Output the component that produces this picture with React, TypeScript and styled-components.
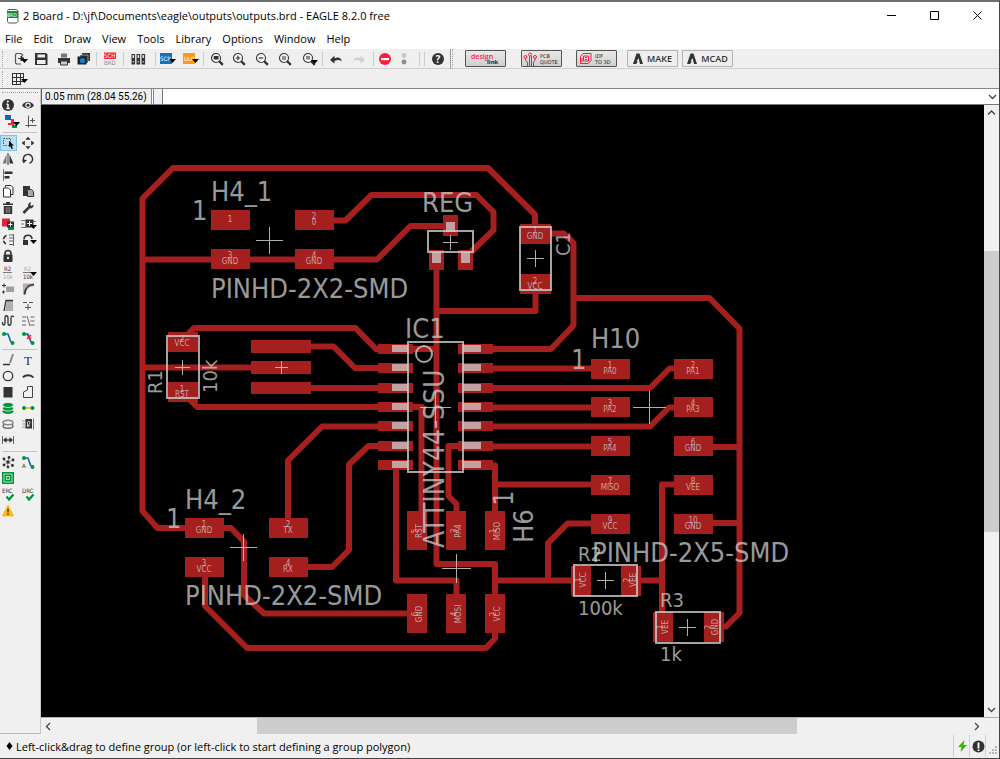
import React from 'react';
import styled, { createGlobalStyle } from 'styled-components';

const INK = '#333333';
const RED = '#fa1e3c';
const GREEN = '#00963c';

const GlobalStyle = createGlobalStyle`
  * { box-sizing: border-box; }
  body { margin: 0; background: #ffffff; }
  button, input { font: inherit; color: inherit; margin: 0; }
`;

/* ---------- window frame ---------- */

const Window = styled.div`
  display: flex;
  flex-direction: column;
  height: 100vh;
  min-height: 480px;
  border-top: 2px solid #6e6e6e;
  border-right: 1px solid #444444;
  border-bottom: 1px solid #444444;
  background: #f0f0f0;
  color: #000000;
  font-family: 'Open Sans', 'Noto Sans', sans-serif;
  font-size: 11px;
  line-height: 16px;
`;

const TitleBar = styled.header`
  display: flex;
  align-items: center;
  flex: none;
  height: 27px;
  padding-left: 6px;
  background: #ffffff;
`;

const Title = styled.h1`
  flex: 1;
  margin: 0 0 0 4px;
  font-size: 11px;
  font-weight: 400;
  white-space: nowrap;
`;

const CaptionButton = styled.button`
  display: flex;
  align-items: center;
  justify-content: center;
  width: 43px;
  height: 27px;
  padding: 0;
  border: 0;
  background: transparent;
`;

const MenuBar = styled.nav`
  display: flex;
  align-items: center;
  flex: none;
  gap: 11px;
  height: 20px;
  padding-left: 5px;
  background: #ffffff;
`;

const MenuButton = styled.button`
  padding: 0;
  border: 0;
  background: transparent;
`;

/* ---------- toolbars ---------- */

const Toolbar = styled.div<{ $h: number; $line: string }>`
  display: flex;
  align-items: center;
  flex: none;
  height: ${p => p.$h}px;
  border-bottom: 1px solid ${p => p.$line};
  background: #efefef;
`;

const Grip = styled.span<{ $gap: number }>`
  width: 2px;
  height: 16px;
  margin: 0 ${p => p.$gap}px 0 2px;
  border-left: 1px dotted #a8a8a8;
`;

const ToolButton = styled.button<{ $w: number }>`
  display: flex;
  align-items: center;
  justify-content: center;
  flex: none;
  width: ${p => p.$w}px;
  height: 18px;
  padding: 0;
  border: 0;
  background: transparent;
  svg { flex: none; }
`;

const Spacer = styled.span<{ $w: number }>`
  flex: none;
  width: ${p => p.$w}px;
`;

const Divider = styled.span<{ $w: number }>`
  display: flex;
  justify-content: center;
  flex: none;
  width: ${p => p.$w}px;
  &::before {
    content: '';
    width: 1px;
    height: 14px;
    background: #cccccc;
  }
`;

const DockEdge = styled.span`
  flex: none;
  width: 3px;
  height: 20px;
  margin-right: 12px;
  border-left: 1px solid #a0a0a0;
  border-right: 1px dotted #a8a8a8;
`;

const ServiceButton = styled.button<{ $gap: number }>`
  display: flex;
  align-items: center;
  justify-content: center;
  flex: none;
  width: 41px;
  height: 17px;
  margin-right: ${p => p.$gap}px;
  padding: 0;
  border: 1px solid #555555;
  border-radius: 1px;
  background: linear-gradient(#e8e8e8, #cfcfcf);
`;

const LinkButton = styled.button`
  display: flex;
  align-items: center;
  justify-content: center;
  flex: none;
  gap: 4px;
  width: 51px;
  height: 17px;
  margin-right: 4px;
  padding: 0;
  border: 1px solid #b4b4b4;
  border-radius: 1px;
  background: #eeeeee;
  color: #333333;
  font-size: 9px;
  font-weight: 600;
`;

/* ---------- body ---------- */

const Body = styled.div`
  display: flex;
  flex: 1;
  min-height: 0;
`;

const Palette = styled.aside`
  display: flex;
  flex-direction: column;
  flex: none;
  width: 41px;
  padding-top: 3px;
  border-right: 1px solid #c8c8c8;
  border-bottom: 1px solid #b8b8b8;
`;

const PaletteGrip = styled.span`
  height: 1px;
  margin: 0 2px 4px;
  border-top: 1px dotted #a0a0a0;
`;

const PaletteRule = styled.hr`
  flex: none;
  width: 35px;
  height: 1px;
  margin: 3px 0 2px 2px;
  border: 0;
  background: #c4c4c4;
`;

const PaletteGroup = styled.div`
  display: flex;
  flex-direction: column;
  gap: 1px;
`;

const PaletteBlock = styled.div`
  display: grid;
  grid-template-columns: 20px 20px;
  grid-auto-rows: 16px;
`;

const PaletteButton = styled.button<{ $on?: boolean }>`
  display: flex;
  align-items: center;
  justify-content: flex-start;
  width: 17px;
  height: 16px;
  padding: 0;
  border: 0;
  background: ${p => (p.$on ? '#b9dff5' : 'transparent')};
  outline: ${p => (p.$on ? '1px solid #7fc0ea' : 'none')};
  outline-offset: -1px;
  svg { flex: none; }
`;

const Main = styled.main`
  display: flex;
  flex-direction: column;
  flex: 1;
  min-width: 0;
`;

const CommandRow = styled.div`
  display: flex;
  flex: none;
  height: 16px;
  border-bottom: 1px solid #777777;
`;

const Coordinates = styled.output`
  width: 111px;
  padding-left: 3px;
  border-left: 1px solid #666666;
  border-right: 1px solid #888888;
  font-family: Roboto, 'Noto Sans', sans-serif;
  font-size: 10px;
  line-height: 15px;
  white-space: nowrap;
`;

const Stub = styled.span`
  width: 11px;
  border-left: 1px solid #ffffff;
  border-right: 1px solid #777777;
  background: #f0f0f0;
  box-shadow: inset 1px 0 0 #888888;
`;

const CommandField = styled.div`
  display: flex;
  flex: 1;
  align-items: center;
  background: #ffffff;
`;

const CommandInput = styled.input`
  flex: 1;
  min-width: 0;
  height: 15px;
  padding: 0 4px;
  border: 0;
  outline: 0;
  background: transparent;
`;

const BareButton = styled.button`
  display: flex;
  align-items: center;
  justify-content: center;
  flex: none;
  width: 14px;
  height: 15px;
  padding: 0;
  border: 0;
  background: transparent;
`;

const CanvasRow = styled.div`
  display: flex;
  flex: 1;
  min-height: 0;
`;

const Canvas = styled.div`
  flex: 1;
  min-width: 0;
  background: #000000;
  svg { display: block; width: 100%; height: 100%; }
`;

const VScroll = styled.div`
  display: flex;
  flex-direction: column;
  align-items: center;
  flex: none;
  width: 15px;
`;

const HScroll = styled.div`
  display: flex;
  align-items: center;
  flex: none;
  height: 17px;
  padding-right: 16px;
  border-top: 1px solid #b0b0b0;
`;

const Track = styled.span<{ $part: number; $thumb?: boolean }>`
  flex: ${p => p.$part};
  align-self: stretch;
  background: ${p => (p.$thumb ? '#cdcdcd' : 'transparent')};
`;

const StatusBar = styled.footer`
  display: flex;
  align-items: center;
  flex: none;
  height: 24px;
  padding-left: 6px;
`;

const Hint = styled.span`
  flex: 1;
  margin-left: 3px;
  padding-top: 1px;
  white-space: nowrap;
`;

const StatusCell = styled.span<{ $w?: number }>`
  display: flex;
  align-items: center;
  justify-content: center;
  flex: none;
  width: ${p => p.$w ?? 16}px;
  height: 22px;
  padding-left: 1px;
  border-left: 1px solid #d0d0d0;
`;

/* ---------- icons ---------- */

type Draw = React.ReactNode;

const Arrow = ({ x = 12, y = 9 }: { x?: number; y?: number }) => (
  <path d={`M${x} ${y}h7l-3.5 4z`} fill="#000" />
);

const Svg = ({ w = 16, h = 16, children }: { w?: number; h?: number; children: Draw }) => (
  <svg width={w} height={h} viewBox={`0 0 ${w} ${h}`} fill="none" stroke="none" aria-hidden="true">
    {children}
  </svg>
);

const Lens = ({ children }: { children?: Draw }) => (
  <>
    <circle cx="7" cy="7" r="4.500" stroke={INK} strokeWidth="1.100" fill="#f6f6f6" />
    <path d="M10 10l3.800 3.800" stroke={INK} strokeWidth="2.400" />
    {children}
  </>
);

const Tiny = ({ x, y, fill = INK, size = 6, children }: { x: number; y: number; fill?: string; size?: number; children: string }) => (
  <text x={x} y={y} fill={fill} fontSize={size} fontFamily="'DejaVu Sans Condensed', 'DejaVu Sans', sans-serif">{children}</text>
);

type Tool = { label: string; w: number; vw?: number; art: Draw };
/* A positive number is a divider of that width, a negative one an empty gap. */
type Item = Tool | number;

const mainTools: Item[] = [
  { label: 'Open', w: 21, vw: 19, art: <><path d="M11.500 5V4L10 2.500H5.500L4.500 3.500V12l1 1H10" stroke="#555" strokeWidth="1.200" /><path d="M7 7.500h4M10 5l3 2.500-3 2.500z" stroke={INK} fill={INK} /><Arrow x={10} y={8} /></> },
  { label: 'Save', w: 20, art: <><path d="M3 2h10l1.500 1.500V14H2V2z" fill={INK} /><rect x="4.500" y="3.500" width="7.500" height="3" fill="#eee" /><rect x="4" y="9" width="8.500" height="4" fill="#eee" /></> },
  { label: 'Print', w: 25, art: <><path d="M5 2.500h6v4H5z" fill="#777" /><path d="M2 7h12v5H2z" fill={INK} /><path d="M4.500 10h7v4h-7z" fill="#ccc" stroke={INK} /></> },
  { label: 'CAM Processor', w: 16, art: <><path d="M6 2h8v8H6z" fill={INK} /><path d="M4 4h8v8H4z" fill={INK} stroke="#efefef" strokeWidth=".5" /><rect x="1.500" y="5.500" width="9" height="8" fill="#222" /><circle cx="6.500" cy="9.500" r="2.600" fill="#0b84d8" /></> },
  9,
  { label: 'Switch to schematic', w: 17, art: <><rect x="2" y="1.500" width="12" height="6.500" fill={RED} /><Tiny x={2} y={7} fill="#fff">SCH</Tiny><Tiny x={2} y={14} fill="#888">BRD</Tiny></> },
  11,
  { label: 'Library manager', w: 17, art: <>{[1.500, 6.500, 11.500].map(x => <g key={x}><rect x={x} y="3" width="3.600" height="10.500" fill={INK} /><rect x={x + 1} y="4" width="1.600" height="3" fill="#ddd" /><rect x={x + 1} y="10" width="1.600" height="1.500" fill="#aaa" /></g>)}</> },
  -7,
  4,
  { label: 'Run script', w: 21, vw: 19, art: <><rect x="2" y="2" width="12" height="11" fill="#0f74bd" /><Tiny x={2} y={10} fill="#fff">SCR</Tiny><Arrow x={11} y={8} /></> },
  { label: 'Run ULP', w: 24, vw: 19, art: <><rect x="2" y="2" width="12" height="11" fill="#fc9a10" /><Tiny x={3} y={10} fill="#fff">ULP</Tiny><Arrow x={11} y={8} /></> },
  2,
  -5,
  { label: 'Zoom to fit', w: 16, art: <Lens><rect x="4.700" y="5" width="4.800" height="3.500" fill={INK} /></Lens> },
  { label: 'Zoom in', w: 28, art: <Lens><path d="M4.800 7h4.400M7 4.800v4.400" stroke={INK} strokeWidth="1.200" /></Lens> },
  { label: 'Zoom out', w: 18, art: <Lens><path d="M4.800 7h4.400" stroke={INK} strokeWidth="1.200" /></Lens> },
  { label: 'Redraw', w: 28, art: <Lens><path d="M5 6h4M5 8h4" stroke={INK} /></Lens> },
  { label: 'Zoom select', w: 22, vw: 19, art: <><Lens><rect x="5" y="5" width="4" height="3.500" fill="#888" /></Lens><Arrow x={10} y={9} /></> },
  3,
  { label: 'Undo', w: 24, art: <path d="M2 9l4.500-4.500v2.700C10 5.500 13 6.500 14 10.500c-2-2-4.500-2-7.500-.500v2.500z" fill={INK} /> },
  { label: 'Redo', w: 22, art: <path d="M14 9L9.500 4.500v2.700C6 5.500 3 6.500 2 10.500c2-2 4.500-2 7.500-.500v2.500z" fill="#d0d0d0" /> },
  6,
  { label: 'Stop', w: 17, art: <><circle cx="8" cy="8" r="6" fill={RED} /><rect x="4" y="7" width="8" height="2.200" fill="#fff" /></> },
  { label: 'Go', w: 22, art: <><circle cx="8" cy="4.500" r="2.400" fill="#c8c8c8" /><circle cx="8" cy="11" r="2.400" fill="#8c8c8c" /></> },
  8,
  2,
  { label: 'Help', w: 25, art: <><circle cx="8" cy="8" r="6" fill={INK} /><text x="8" y="11.500" textAnchor="middle" fontSize="10" fontWeight="700" fill="#fff" fontFamily="'Open Sans', sans-serif">?</text></> },
];

const dot = (x: number, y: number, c: string, r = 2) => <circle cx={x} cy={y} r={r} fill={c} />;

type Cell = { label: string; on?: boolean; art: Draw } | null;

const palTop: Cell[][] = [[
  { label: 'Info', art: <><circle cx="8" cy="8" r="6" fill={INK} /><path d="M8 7v4.500M6.500 7.200H8M6.300 11.500h3.500" stroke="#fff" strokeWidth="1.500" />{dot(7.800, 4.500, '#fff', 1)}</> },
  { label: 'Show', art: <><path d="M2 8.500C5 3.500 11 3.500 14 8.500 11 12.500 5 12.500 2 8.500z" fill={INK} /><circle cx="8" cy="8.300" r="2.700" fill="#efefef" />{dot(8, 8.300, INK, 1.500)}</> },
  { label: 'Layer settings', art: <><rect x="5" y="2" width="6" height="5" fill="#1268b3" /><path d="M11 6v4H8v2h6V6z" fill={RED} /><path d="M12 12h5v3h-5z" fill={GREEN} /><Arrow x={13} y={9} /></> },
  { label: 'Mark', art: <path d="M8.500 2.500v12M5.500 12.500h11M12.500 5v5M10 7.500h5" stroke="#555" /> },
]];

const palEdit: Cell[][] = [
  [
    { label: 'Group', on: true, art: <><rect x="3.500" y="3.500" width="7" height="7" stroke="#555" strokeDasharray="1.500 1" /><path d="M9 6l5 4.500h-2.300l1.300 3-1.500.600-1.300-3L9 12.500z" fill="#000" /></> },
    { label: 'Move', art: <path d="M8 2l2 2.500H6zM8 14l2-2.500H6zM2 8l2.500-2v4zM14 8l-2.500-2v4z" fill={INK} stroke={INK} strokeWidth=".600" /> },
    { label: 'Mirror', art: <><path d="M6.500 3.500v9H2.500z" fill="#777" /><path d="M9.500 3.500v9h4z" fill={INK} /><path d="M8 2v12" stroke={INK} /></> },
    { label: 'Rotate', art: <><path d="M4.500 11A4.600 4.600 0 1 1 9.500 12.300" stroke={INK} strokeWidth="1.400" /><path d="M2 8.500l5 .500-3.500 3.500z" fill={INK} /></> },
    { label: 'Align', art: <><path d="M3.500 2v12" stroke="#777" /><path d="M4.500 4.500h8v2.500h-8zM4.500 9h5v2.500h-5z" fill={INK} /></> },
    null,
    { label: 'Copy', art: <><path d="M5.500 4.500v-2H11l2 2v7h-2" stroke={INK} /><path d="M3.500 5h5l2 2v7h-7z" stroke={INK} fill="#fff" /></> },
    { label: 'Paste', art: <><path d="M3 3h7v3H7v7H3z" fill={INK} /><path d="M7.500 6.500h4l2 2v5h-6z" fill="#aaa" stroke={INK} /></> },
  ],
  [
    { label: 'Delete', art: <><path d="M3 3.500h10v1.600H3zM6 2h4v1.500H6z" fill={INK} /><path d="M3.800 6h8.400v8H3.800z" fill={INK} /><path d="M6.300 7v6M8 7v6M9.700 7v6" stroke="#aaa" strokeWidth=".700" /></> },
    { label: 'Change', art: <path d="M13.500 4.500l-2 1.500-1.500-1.500 1.500-2c-2.500-.500-4 1.500-3.200 3.700L2.500 12l1.800 2 5.500-5.800c2 .800 4.200-1 3.700-3.700z" fill={INK} /> },
    { label: 'Replace', art: <><rect x="2" y="2.500" width="8" height="8" fill="#e4203a" /><path d="M8 9h6v5H8z" fill={GREEN} /><rect x="7" y="5.500" width="7" height="6" fill={INK} /><path d="M8.500 8.500h4M10.500 6.500v4" stroke="#fff" /></> },
    { label: 'Add', art: <><path d="M1 4.500h5M1 11.500h5M1 8h3M13 5.500h3" stroke="#777" /><rect x="5.500" y="3.500" width="8" height="8" fill={INK} /><path d="M7 7.500h5M9.500 5v5" stroke="#fff" /><Arrow x={10} y={9} /></> },
    { label: 'Pinswap', art: <><path d="M9 3h4M9 6h4M9 9h4M9 12.500h4M13.500 2v12" stroke="#666" /><path d="M6.500 3.500C2.500 5 2.500 10 6 12" stroke={INK} strokeWidth="1.500" strokeDasharray="5 1.500" /></> },
    { label: 'Gateswap', art: <><path d="M4 7.500C4 2 12 2 12 7" stroke={INK} strokeWidth="1.600" /><rect x="3" y="8" width="5" height="5" fill={INK} /><Arrow x={10} y={8} /></> },
    { label: 'Lock', art: <><path d="M5 7V5.500a3 3 0 0 1 6 0V7" stroke={INK} strokeWidth="1.600" /><rect x="3.500" y="6.500" width="9" height="7.500" rx="1" fill={INK} />{dot(8, 10, '#eee', 1.200)}</> },
    null,
  ],
  [
    { label: 'Name', art: <><Tiny x={4} y={6}>R2</Tiny><path d="M3 7.500h9" stroke="#777" /><Tiny x={3} y={14} fill="#aaa">10k</Tiny></> },
    { label: 'Value', art: <><Tiny x={4} y={6} fill="#aaa">R2</Tiny><path d="M3 7.500h9" stroke="#777" /><Tiny x={3} y={14}>10k</Tiny><Arrow x={10} y={7} /></> },
    { label: 'Smash', art: <><path d="M6 5.500h8v5.500H6z" fill="#a0a0a0" /><path d="M2 4.500h4M4 2.500v4M2 11h3M3.500 9.500v3" stroke={INK} /></> },
    { label: 'Miter', art: <><path d="M3 2.500h11v3C9 5.500 6.500 8 6 13.500H3z" fill="#b0b0b0" /><path d="M14 3.500C8 3.500 5 7 4.500 13.500" stroke={INK} strokeWidth="1.500" /></> },
    { label: 'Split', art: <><path d="M5 14L7 3h6v11z" fill="#b0b0b0" /><path d="M4 14L6 3.500h7" stroke={INK} strokeWidth="1.300" /></> },
    { label: 'Optimize', art: <path d="M3 5.500h4M9 5.500h4M8 7v6M5 10.500h6" stroke="#555" /> },
    { label: 'Meander', art: <path d="M2.500 9c0 4 2.500 4 2.500 0V5c0-3 3-3 3 0v5c0 3 3 3 3 0V5c0-2 2-2.500 3-1" stroke={INK} strokeWidth="1.300" /> },
    { label: 'Differential pair', art: <path d="M2 4h4M2 8h4M2 12h4M7 3l3 10M10.500 4h4M10.500 8h4M10.500 12h4" stroke="#666" /> },
  ],
  [
    { label: 'Route', art: <><path d="M4 4h4l2.500 7 2 2" stroke="#1268b3" strokeWidth="1.600" />{dot(4, 4, GREEN)}{dot(12.500, 13, GREEN)}</> },
    { label: 'Ripup', art: <><path d="M4 4h4l2.500 7 2 2" stroke="#1268b3" strokeWidth="1.600" />{dot(4, 4, GREEN)}{dot(12.500, 13, GREEN)}<path d="M7 5l4 4M11 5l-4 4" stroke={RED} strokeWidth="1.500" /></> },
  ],
];

const palDraw: Cell[][] = [[
  { label: 'Wire', art: <><path d="M3 12.500h7" stroke={INK} strokeWidth="1.500" /><path d="M10 11l3-9" stroke="#888" strokeWidth="2" /></> },
  { label: 'Text', art: <text x="8" y="12.500" textAnchor="middle" fontSize="13" fill={INK} fontFamily="'Liberation Serif', serif">T</text> },
  { label: 'Circle', art: <circle cx="8" cy="8" r="4.700" stroke={INK} strokeWidth="1.300" /> },
  { label: 'Arc', art: <path d="M3 9.500C5 6.500 11 6.500 13.500 9.500" stroke={INK} strokeWidth="1.800" /> },
  { label: 'Rectangle', art: <rect x="3.500" y="3" width="9" height="10.500" fill={INK} /> },
  { label: 'Polygon', art: <path d="M12.500 2.500v11h-9V8l4-2V2.500z" stroke="#444" /> },
  { label: 'Via', art: <><ellipse cx="8" cy="11.500" rx="5.500" ry="2.500" fill={GREEN} /><ellipse cx="8" cy="8.500" rx="5.500" ry="2.500" fill={GREEN} stroke="#fff" strokeWidth=".700" /><ellipse cx="8" cy="5" rx="5.500" ry="2.500" fill={GREEN} stroke="#fff" strokeWidth=".700" /></> },
  { label: 'Signal', art: <><path d="M4 8h8" stroke="#f0b800" strokeWidth="1.600" />{dot(4, 8, GREEN)}{dot(12.500, 8, GREEN)}</> },
  { label: 'Hole', art: <><ellipse cx="8" cy="10" rx="5" ry="2.300" stroke="#666" strokeWidth="1.400" /><ellipse cx="8" cy="6.500" rx="5" ry="2.300" fill="#eee" stroke="#888" strokeWidth="1.400" /></> },
  { label: 'Attribute', art: <><path d="M2 5h4M2 8h3M2 11h4" stroke="#999" /><rect x="5.500" y="3" width="6.500" height="9.500" fill={INK} /><path d="M7.500 11V6c1.500-1.500 3-.500 2.500 1L8 10h2" stroke="#eee" strokeWidth=".800" /><path d="M13.500 2.500v11" stroke="#777" /></> },
  { label: 'Dimension', art: <><path d="M2.500 4v8M13.500 4v8" stroke="#666" /><path d="M4 8h8" stroke={INK} strokeWidth="1.500" /><path d="M3 8l3.500-3v6zM13 8L9.500 5v6z" fill={INK} /></> },
]];

const palCheck: Cell[][] = [[
  { label: 'Ratsnest', art: <><path d="M3.500 6l9 5M9 3l-2 10M13 5l-9 6" stroke="#888" strokeWidth=".700" />{dot(4, 5, INK, 1.400)}{dot(9, 3.500, INK, 1.400)}{dot(13, 6, INK, 1.400)}{dot(8, 8, INK, 1.700)}{dot(4, 11, INK, 1.400)}{dot(8, 13, INK, 1.400)}{dot(12.500, 11.500, INK, 1.400)}</> },
  { label: 'Autorouter', art: <><path d="M4 4h4l2.500 7 2 2" stroke="#1268b3" strokeWidth="1.600" />{dot(4, 4, GREEN)}{dot(12.500, 13, GREEN)}<Tiny x={2} y={14}>A</Tiny></> },
  { label: 'Board outline', art: <><rect x="2" y="2" width="12" height="12" fill={GREEN} /><rect x="4" y="4" width="8" height="8" stroke="#d8f0d8" strokeWidth=".800" /><rect x="6.500" y="6.500" width="3" height="3" stroke="#d8f0d8" strokeWidth=".800" /></> },
  null,
  { label: 'Electrical rule check', art: <><Tiny x={2} y={7}>ERC</Tiny><path d="M6.500 10.500l2.500 3 4.500-5" stroke={GREEN} strokeWidth="2.200" /></> },
  { label: 'Design rule check', art: <><Tiny x={2} y={7}>DRC</Tiny><path d="M6.500 10.500l2.500 3 4.500-5" stroke={GREEN} strokeWidth="2.200" /></> },
  { label: 'Errors', art: <><path d="M8 3l5.500 11h-11z" fill="#fdb913" stroke="#fdb913" strokeLinejoin="round" /><path d="M8 6.500v4M8 11.500v1.400" stroke={INK} strokeWidth="1.300" /></> },
]];

const PaletteSection = ({ blocks }: { blocks: Cell[][] }) => (
  <PaletteGroup>
    {blocks.map((cells, i) => (
      <PaletteBlock key={i}>
        {cells.map((c, j) =>
          c ? (
            <PaletteButton key={c.label} $on={c.on} aria-label={c.label}>
              <Svg w={20}>{c.art}</Svg>
            </PaletteButton>
          ) : (
            <span key={j} />
          ),
        )}
      </PaletteBlock>
    ))}
  </PaletteGroup>
);

const Autodesk = () => (
  <svg width="10" height="11" viewBox="0 0 10 11" aria-hidden="true">
    <path d="M0 11L3.500.500h3L10 11H7L5.500 5 3.500 8.500H5L3 11z" fill="#333" />
  </svg>
);

const Chevron = ({ d }: { d: string }) => (
  <svg width="9" height="9" viewBox="0 0 9 9" fill="none" aria-hidden="true">
    <path d={d} stroke="#444" strokeWidth="1.300" />
  </svg>
);

/* ---------- board drawing ---------- */

const traces = [
  'M535 228V214.500L488 168H173L142.500 198.500V511L157.500 528H190',
  'M142.500 259.500H377L410.500 226H446',
  'M330 220.500H345.500L371.500 195H476.500L493.500 212V230L470 253',
  'M184 338L194 328H355.500L376 349H390',
  'M142.500 367.500H255',
  'M184 394L197.500 407H421.500V515',
  'M308 346.500H333.500L355 368H390',
  'M308 388H390',
  'M436.500 268V564H495V600',
  'M436.500 311H535.500V288',
  'M410 349H436.500',
  'M480 349H551L573.500 325.500V243L564 233.500H545',
  'M573.500 298H709.500L739.500 328.500V613L726 626.500H716',
  'M710 447H739.500',
  'M710 523H739.500',
  'M480 368.500H594',
  'M480 388H650L669.500 368.500H678',
  'M480 407.500H594',
  'M480 426.500H650L669 407.500H678',
  'M480 446.500H594',
  'M465 446H448.500V496L456.500 504V515',
  'M480 465.500H495V515',
  'M495 484.500H594',
  'M495 580.500H575',
  'M548 580.500V543L567.500 523.500H594',
  'M396 465V580.500H456.500V600',
  'M390 446H368.500L349 464.500V550L332 567H305',
  'M390 426.500H322L288 460.500V522',
  'M220 528H231L244 541.500V595L264 613.500H410',
  'M205 573V606L247 648H486L495 638.500V630',
  'M638 580.500H662',
  'M678 484.500H662V620',
];

type Rect = [number, number, number, number];

const legY = [349, 368, 388, 407, 426, 446, 465];

const pads: Rect[] = [
  [168, 332, 30, 20], [168, 382, 30, 20],
  [251, 340, 60, 13], [251, 361, 60, 13], [251, 382, 60, 12],
  [443, 215, 15, 21], [429, 250, 15, 20], [458, 250, 15, 20],
  [520, 224, 31, 20], [520, 274, 31, 20],
  [571, 566, 20, 30], [621, 566, 20, 30],
  [653, 612, 20, 30], [704, 612, 20, 30],
  ...legY.map((y): Rect => [378, y - 5, 35, 10]),
  ...legY.map((y): Rect => [458, y - 5, 35, 10]),
];

const pins: Rect[] = [
  [446, 222, 9, 10], [432, 252, 9, 11], [461, 252, 9, 11],
  ...legY.map((y): Rect => [392, y - 4, 16, 7]),
  ...legY.map((y): Rect => [463, y - 4, 18, 7]),
];

const outlines: Rect[] = [
  [167, 336, 32, 62], [428, 231, 45, 21], [520, 227, 31, 63],
  [408, 342, 55, 130], [574, 565, 63, 31], [656, 612, 64, 31],
];

const crosses: [number, number, number][] = [
  [269, 240, 13], [182, 367, 7], [281, 367, 6], [450, 242, 7], [535, 258, 8],
  [435, 407, 15], [649, 407, 16], [243, 547, 13], [456, 568, 14], [605, 580, 8], [687, 627, 8],
];

/* Horizontal header pads: x, y, number, net */
const wide: [number, number, string, string][] = [
  [211, 210, '1', ''], [295, 210, '2', '0'], [211, 249, '3', 'GND'], [295, 249, '4', 'GND'],
  [185, 518, '1', 'GND'], [269, 518, '2', 'TX'], [185, 557, '3', 'VCC'], [269, 557, '4', 'RX'],
  [591, 359, '1', 'PA0'], [674, 359, '2', 'PA1'], [591, 397, '3', 'PA2'], [674, 397, '4', 'PA3'],
  [591, 436, '5', 'PA4'], [674, 436, '6', 'GND'], [591, 475, '7', 'MISO'], [674, 475, '8', 'VEE'],
  [591, 514, '9', 'VCC'], [674, 514, '10', 'GND'],
];

const tall: [number, number, string, string][] = [
  [407, 511, '5', 'RST'], [446, 511, '3', 'PA4'], [485, 511, '1', 'MISO'],
  [407, 594, '6', 'GND'], [446, 594, '4', 'MOSI'], [485, 594, '2', 'VCC'],
];

const SILK = { fill: '#cdcdcd', opacity: 0.75 };

const Silk = ({ x, y, size = 27, up, children }: { x: number; y: number; size?: number; up?: boolean; children: string }) => (
  <text x={x} y={y} fontSize={size} transform={up ? `rotate(-90 ${x} ${y})` : undefined} {...SILK}>{children}</text>
);

const Net = ({ x, y, up, children }: { x: number; y: number; up?: boolean; children: string }) => (
  <text x={x} y={y} fontSize={8} textAnchor="middle" transform={up ? `rotate(-90 ${x} ${y})` : undefined} {...SILK}>{children}</text>
);

const Board = () => (
  <svg viewBox="41 105 943 612" preserveAspectRatio="xMinYMin meet" fontFamily="'DejaVu Sans Condensed', 'DejaVu Sans', sans-serif" role="img" aria-label="Board layout">
    <g fill="none" stroke="#a61f1f" strokeWidth="6" strokeLinejoin="round">
      {traces.map(d => <path key={d} d={d} />)}
    </g>
    <g fill="#a61f1f">
      {pads.map(([x, y, w, h]) => <rect key={`${x} ${y}`} x={x} y={y} width={w} height={h} />)}
      {wide.map(([x, y]) => <rect key={`${x} ${y}`} x={x} y={y} width="39" height="20" />)}
      {tall.map(([x, y]) => <rect key={`${x} ${y}`} x={x} y={y} width="20" height="39" />)}
    </g>
    <g {...SILK}>
      {pins.map(([x, y, w, h]) => <rect key={`${x} ${y}`} x={x} y={y} width={w} height={h} />)}
    </g>
    <g fill="none" stroke="#cdcdcd" strokeWidth="2" opacity=".8">
      {outlines.map(([x, y, w, h]) => <rect key={`${x} ${y}`} x={x} y={y} width={w} height={h} />)}
      <circle cx="424" cy="354" r="8" />
    </g>
    <g stroke="#cdcdcd" strokeWidth="1" opacity=".85">
      {crosses.map(([x, y, r]) => (
        <path key={`${x} ${y}`} d={`M${x - r} ${y + 0.5}H${x + r + 1}M${x + 0.5} ${y - r}V${y + r + 1}`} />
      ))}
    </g>

    <Silk x={211} y={201}>H4_1</Silk>
    <Silk x={192} y={220}>1</Silk>
    <Silk x={211} y={298}>PINHD-2X2-SMD</Silk>
    <Silk x={422} y={212}>REG</Silk>
    <Silk x={405} y={338}>IC1</Silk>
    <Silk x={444} y={548} size={28} up>ATTINY44-SSU</Silk>
    <Silk x={591} y={348}>H10</Silk>
    <Silk x={571} y={369}>1</Silk>
    <Silk x={592} y={562}>PINHD-2X5-SMD</Silk>
    <Silk x={185} y={509}>H4_2</Silk>
    <Silk x={166} y={528}>1</Silk>
    <Silk x={185} y={605}>PINHD-2X2-SMD</Silk>
    <Silk x={513} y={506} up>1</Silk>
    <Silk x={533} y={543} up>H6</Silk>
    <Silk x={570} y={256} size={20} up>C1</Silk>
    <Silk x={162} y={394} size={20} up>R1</Silk>
    <Silk x={217} y={393} size={20} up>10k</Silk>
    <Silk x={578} y={561} size={20}>R2</Silk>
    <Silk x={578} y={615} size={20}>100k</Silk>
    <Silk x={660} y={607} size={20}>R3</Silk>
    <Silk x={660} y={661} size={20}>1k</Silk>

    {wide.map(([x, y, n, net]) => (
      <g key={`${x} ${y}`}>
        <Net x={x + 19} y={net ? y + 9 : y + 12}>{n}</Net>
        {net && <Net x={x + 19} y={y + 15}>{net}</Net>}
      </g>
    ))}
    {tall.map(([x, y, n, net]) => (
      <g key={`${x} ${y}`}>
        <Net x={x + 11} y={y + 20} up>{n}</Net>
        <Net x={x + 15} y={y + 20} up>{net}</Net>
      </g>
    ))}
    <Net x={182} y={342}>2</Net>
    <Net x={182} y={346}>VCC</Net>
    <Net x={182} y={392}>1</Net>
    <Net x={182} y={397}>RST</Net>
    <Net x={535} y={233}>1</Net>
    <Net x={535} y={239}>GND</Net>
    <Net x={535} y={284}>2</Net>
    <Net x={535} y={289}>VCC</Net>
    <Net x={581} y={580} up>1</Net>
    <Net x={586} y={580} up>VCC</Net>
    <Net x={630} y={580} up>2</Net>
    <Net x={636} y={580} up>VEE</Net>
    <Net x={663} y={627} up>1</Net>
    <Net x={668} y={627} up>VEE</Net>
    <Net x={711} y={627} up>2</Net>
    <Net x={718} y={627} up>GND</Net>
  </svg>
);

/* ---------- page ---------- */

const menus = ['File', 'Edit', 'Draw', 'View', 'Tools', 'Library', 'Options', 'Window', 'Help'];

export default function App() {
  return (
    <Window>
      <GlobalStyle />
      <TitleBar>
        <svg width="13" height="16" viewBox="0 0 13 16" aria-hidden="true">
          <path d="M2.500 1.500h8l1.500 1.500v10.500l-1.500 1.500h-8L1.500 13.500v-11z" fill="#fff" stroke="#555" />
          <rect x="1" y="3" width="11" height="7" fill={GREEN} />
          <text x="1" y="9" fontSize="5" fill="#fff" fontFamily="'DejaVu Sans Condensed', 'DejaVu Sans', sans-serif">BRD</text>
        </svg>
        <Title>2 Board - D:\jf\Documents\eagle\outputs\outputs.brd - EAGLE 8.2.0 free</Title>
        <CaptionButton aria-label="Minimize">
          <svg width="10" height="10" viewBox="0 0 10 10"><path d="M0 4.500h9" stroke="#000" /></svg>
        </CaptionButton>
        <CaptionButton aria-label="Maximize">
          <svg width="10" height="10" viewBox="0 0 10 10"><path d="M.500.500h8v8h-8z" fill="none" stroke="#000" /></svg>
        </CaptionButton>
        <CaptionButton aria-label="Close">
          <svg width="10" height="10" viewBox="0 0 10 10"><path d="M.500.500l8 8M8.500.500l-8 8" stroke="#000" /></svg>
        </CaptionButton>
      </TitleBar>
      <MenuBar>
        {menus.map(m => <MenuButton key={m}>{m}</MenuButton>)}
      </MenuBar>

      <Toolbar $h={20} $line="#d0d0d0">
        <Grip $gap={6} />
        {mainTools.map((t, i) => {
          if (typeof t !== 'number') {
            return (
              <ToolButton key={t.label} $w={t.w} aria-label={t.label}>
                <Svg w={t.vw}>{t.art}</Svg>
              </ToolButton>
            );
          }
          return t < 0 ? <Spacer key={i} $w={-t} /> : <Divider key={i} $w={t} />;
        })}
        <DockEdge />
        <ServiceButton $gap={15} aria-label="Design link">
          <svg width="37" height="15" viewBox="0 0 37 15" fontFamily="'Open Sans', sans-serif">
            <text x="4" y="8" fontSize="7" fontWeight="600" fill={RED}>design</text>
            <text x="20" y="13" fontSize="6" fontWeight="700" fill="#222">link</text>
          </svg>
        </ServiceButton>
        <ServiceButton $gap={14} aria-label="PCB quote">
          <svg width="37" height="15" viewBox="0 0 37 15" fontFamily="'DejaVu Sans', sans-serif" fontSize="5" fill="#222">
            <g fill="none" stroke={RED}>
              <circle cx="2.500" cy="6" r="1.500" /><circle cx="7" cy="3.500" r="1.500" /><circle cx="12" cy="6" r="1.500" />
              <path d="M2.500 7.500v2L4.500 11v4M6.500 5V15M8.500 5V15M12 7.500v2L10.500 11v4" />
            </g>
            <text x="17" y="7">PCB</text>
            <text x="17" y="13">QUOTE</text>
          </svg>
        </ServiceButton>
        <ServiceButton $gap={10} aria-label="IDF to 3D">
          <svg width="37" height="15" viewBox="0 0 37 15" fontFamily="'DejaVu Sans', sans-serif" fontSize="5" fill="#222">
            <g fill="none" stroke={RED}>
              <path d="M5 2.500h8v7l-3 3H2.500v-7z" /><path d="M5.500 5h5v5h-5zM7 6.500h2M7 8.500h2M4 7v4" />
            </g>
            <text x="17" y="7">IDF</text>
            <text x="17" y="13">TO 3D</text>
          </svg>
        </ServiceButton>
        <LinkButton><Autodesk />MAKE</LinkButton>
        <LinkButton><Autodesk />MCAD</LinkButton>
      </Toolbar>

      <Toolbar $h={20} $line="#888888">
        <Grip $gap={6} />
        <ToolButton $w={20} aria-label="Grid">
          <Svg w={20}>
            <path d="M2 2.500h12M2 6.500h12M2 10.500h12M2 13.500h9M2.500 2v12M6.500 2v12M10.500 2v12M13.500 2v8" stroke={INK} />
            <Arrow x={11} y={8} />
          </Svg>
        </ToolButton>
      </Toolbar>

      <Body>
        <Palette>
          <PaletteGrip />
          <PaletteSection blocks={palTop} />
          <PaletteRule />
          <PaletteSection blocks={palEdit} />
          <PaletteRule />
          <PaletteSection blocks={palDraw} />
          <PaletteRule />
          <PaletteSection blocks={palCheck} />
        </Palette>
        <Main>
          <CommandRow>
            <Coordinates>0.05 mm (28.04 55.26)</Coordinates>
            <Stub />
            <CommandField>
              <CommandInput aria-label="Command" />
              <BareButton aria-label="Command history"><Chevron d="M1 3l3.500 3.500L8 3" /></BareButton>
            </CommandField>
          </CommandRow>
          <CanvasRow>
            <Canvas><Board /></Canvas>
            <VScroll>
              <BareButton aria-label="Scroll up"><Chevron d="M1 6.500L4.500 3 8 6.500" /></BareButton>
              <Track $part={131} />
              <Track $part={281} $thumb />
              <Track $part={170} />
              <BareButton aria-label="Scroll down"><Chevron d="M1 3l3.500 3.500L8 3" /></BareButton>
            </VScroll>
          </CanvasRow>
          <HScroll>
            <BareButton aria-label="Scroll left"><Chevron d="M6 1L2.500 4.500 6 8" /></BareButton>
            <Track $part={202} />
            <Track $part={540} $thumb />
            <Track $part={172} />
            <BareButton aria-label="Scroll right"><Chevron d="M3 1l3.500 3.500L3 8" /></BareButton>
          </HScroll>
        </Main>
      </Body>

      <StatusBar>
        <svg width="7" height="8" viewBox="0 0 7 8" aria-hidden="true"><path d="M3.500 0l3 4-3 4-3-4z" fill="#000" /></svg>
        <Hint>Left-click&amp;drag to define group (or left-click to start defining a group polygon)</Hint>
        <StatusCell>
          <svg width="11" height="12" viewBox="0 0 11 12" aria-hidden="true"><path d="M7.500 0L1 7h3.500L3.500 12 10 5H6.500z" fill="#3cb400" /></svg>
        </StatusCell>
        <StatusCell>
          <svg width="13" height="13" viewBox="0 0 13 13" aria-hidden="true"><circle cx="6.500" cy="6.500" r="6" fill="#333" /><path d="M6.500 2.500v6M6.500 9.500v1.500" stroke="#fff" strokeWidth="1.800" /></svg>
        </StatusCell>
        <StatusCell $w={14}>
          <svg width="9" height="18" viewBox="0 0 9 18" fill="#b8b8b8" aria-hidden="true"><path d="M6 9h2v2H6zM3 12h2v2H3zM6 12h2v2H6zM0 15h2v2H0zM3 15h2v2H3zM6 15h2v2H6z" /></svg>
        </StatusCell>
      </StatusBar>
    </Window>
  );
}
